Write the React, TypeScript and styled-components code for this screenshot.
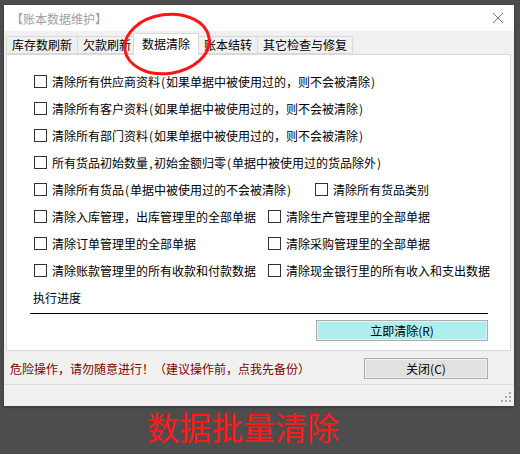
import React from "react";
import styled, { createGlobalStyle } from "styled-components";

const GlobalStyle = createGlobalStyle`
  html, body {
    margin: 0;
    padding: 0;
    background: #4d4d4d;
  }
  body {
    font-family: "Noto Sans CJK SC", "Microsoft YaHei", sans-serif;
    font-size: 12px;
    color: #000;
  }
`;

const Page = styled.div`
  width: 520px;
  height: 454px;
  box-sizing: border-box;
  padding: 5px 0 0 4px;
  display: flex;
  flex-direction: column;
  align-items: flex-start;
  overflow: hidden;
`;

const Window = styled.div`
  position: relative;
  width: 510px;
  height: 401px;
  background: #f0f0f0;
  display: flex;
  flex-direction: column;
  box-shadow: 0 1px 3px rgba(0, 0, 0, 0.35);
`;

const TitleBar = styled.div`
  height: 26px;
  background: #fff;
  display: flex;
  align-items: center;
  justify-content: space-between;
  padding: 0 10px 0 7px;
  flex-shrink: 0;
`;

const Title = styled.span`
  color: #a0a0a0;
  font-size: 12px;
  line-height: 12px;
  margin-top: 1px;
`;

const Body = styled.div`
  display: flex;
  flex-direction: column;
  padding: 2px 3px 0 2px;
`;

const TabBar = styled.div`
  display: flex;
  align-items: flex-end;
  height: 21px;
  position: relative;
  z-index: 1;
`;

const Tab = styled.div<{ $active?: boolean }>`
  box-sizing: border-box;
  height: ${(p) => (p.$active ? "22px" : "18px")};
  padding: ${(p) => (p.$active ? "3px 8px 0" : "0 5px")};
  margin: ${(p) => (p.$active ? "0 0 -1px -4px" : "0")};
  background: ${(p) => (p.$active ? "#fff" : "#f0f0f0")};
  border: 1px solid #d9d9d9;
  border-bottom: ${(p) => (p.$active ? "none" : "1px solid #d9d9d9")};
  border-left: ${(p) => (p.$active ? "1px solid #d9d9d9" : "none")};
  display: flex;
  align-items: ${(p) => (p.$active ? "flex-start" : "center")};
  white-space: nowrap;
  font-size: 12px;
  line-height: 14px;
  position: relative;
  z-index: ${(p) => (p.$active ? 2 : 1)};
  &:first-child {
    border-left: 1px solid #d9d9d9;
  }
`;

const Panel = styled.div`
  box-sizing: border-box;
  height: 297px;
  background: #fff;
  border: 1px solid #d9d9d9;
  padding: 13px 22px 0 23px;
  display: flex;
  flex-direction: column;
`;

const Row = styled.div<{ $split?: number }>`
  height: 27px;
  padding-left: 4px;
  display: grid;
  grid-template-columns: ${(p) => (p.$split ? `${p.$split}px auto` : "auto")};
  align-items: center;
  justify-content: start;
`;

const Check = styled.label`
  display: flex;
  align-items: center;
  gap: 5px;
  white-space: nowrap;
  line-height: 14px;
`;

const Box = styled.span`
  box-sizing: border-box;
  width: 13px;
  height: 13px;
  border: 1px solid #333;
  background: #fff;
  flex-shrink: 0;
`;

const Half = styled.span`
  display: inline-block;
  width: 6px;
  text-align: center;
`;

const ProgressLabel = styled.div`
  height: 27px;
  display: flex;
  align-items: center;
  padding-left: 3px;
`;

const Rule = styled.div`
  height: 1px;
  background: #000;
  margin-top: 2px;
`;

const ButtonRow = styled.div`
  display: flex;
  justify-content: flex-end;
  margin-top: 6px;
`;

const Button = styled.button<{ $w: number; $bg: string }>`
  box-sizing: border-box;
  width: ${(p) => p.$w}px;
  height: 21px;
  border: 1px solid #adadad;
  background: ${(p) => p.$bg};
  box-shadow: inset 0 0 0 1px rgba(255, 255, 255, 0.5);
  font-family: "Noto Sans CJK SC", sans-serif;
  font-size: 12px;
  color: #000;
  padding: 0;
  display: flex;
  align-items: center;
  justify-content: center;
  line-height: 14px;
`;

const Footer = styled.div`
  display: flex;
  flex-direction: column;
  flex: 1;
`;

const ActionRow = styled.div`
  display: flex;
  align-items: center;
  justify-content: space-between;
  padding: 7px 26px 0 6px;
`;

const Warning = styled.span`
  color: #800000;
  font-size: 12px;
  white-space: nowrap;
  margin-top: -1px;
`;

const Separator = styled.div`
  height: 1px;
  background: #dcdcdc;
  margin-top: 5px;
`;

const StatusStrip = styled.div`
  flex: 1;
  display: flex;
  justify-content: flex-end;
  align-items: flex-end;
  padding: 0 2px 3px 0;
`;

const Annotation = styled.svg`
  position: absolute;
  left: 118px;
  top: 0;
  pointer-events: none;
  z-index: 5;
`;

const Caption = styled.div`
  width: 510px;
  text-align: center;
  color: #ff1a1a;
  font-size: 32px;
  line-height: 36px;
  margin-top: 2px;
  padding-right: 32px;
  box-sizing: border-box;
`;

const CloseIcon = () => (
  <svg width="12" height="12" viewBox="0 0 12 12">
    <path d="M1 1 L11 11 M11 1 L1 11" stroke="#777" strokeWidth="1" fill="none" />
  </svg>
);

const Grip = () => (
  <svg width="12" height="12" viewBox="0 0 12 12">
    <g fill="#a8a8a8">
      <rect x="9" y="1" width="2" height="2" />
      <rect x="5" y="5" width="2" height="2" />
      <rect x="9" y="5" width="2" height="2" />
      <rect x="1" y="9" width="2" height="2" />
      <rect x="5" y="9" width="2" height="2" />
      <rect x="9" y="9" width="2" height="2" />
    </g>
  </svg>
);

const renderText = (s: string) =>
  s.split(/([(),])/).map((part, i) =>
    part === "(" || part === ")" || part === "," ? (
      <Half key={i}>{part}</Half>
    ) : (
      <React.Fragment key={i}>{part}</React.Fragment>
    )
  );

const CB = ({ text }: { text: string }) => (
  <Check>
    <Box />
    <span>{renderText(text)}</span>
  </Check>
);

const tabs = ["库存数刷新", "欠款刷新", "数据清除", "账本结转", "其它检查与修复"];

export default function App() {
  return (
    <>
      <GlobalStyle />
      <Page>
        <Window>
          <TitleBar>
            <Title>【账本数据维护】</Title>
            <CloseIcon />
          </TitleBar>
          <Body>
            <TabBar>
              {tabs.map((t) => (
                <Tab key={t} $active={t === "数据清除"}>
                  {t}
                </Tab>
              ))}
            </TabBar>
            <Panel>
              <Row>
                <CB text="清除所有供应商资料(如果单据中被使用过的，则不会被清除)" />
              </Row>
              <Row>
                <CB text="清除所有客户资料(如果单据中被使用过的，则不会被清除)" />
              </Row>
              <Row>
                <CB text="清除所有部门资料(如果单据中被使用过的，则不会被清除)" />
              </Row>
              <Row>
                <CB text="所有货品初始数量,初始金额归零(单据中被使用过的货品除外)" />
              </Row>
              <Row $split={281}>
                <CB text="清除所有货品(单据中被使用过的不会被清除)" />
                <CB text="清除所有货品类别" />
              </Row>
              <Row $split={234}>
                <CB text="清除入库管理，出库管理里的全部单据" />
                <CB text="清除生产管理里的全部单据" />
              </Row>
              <Row $split={234}>
                <CB text="清除订单管理里的全部单据" />
                <CB text="清除采购管理里的全部单据" />
              </Row>
              <Row $split={234}>
                <CB text="清除账款管理里的所有收款和付款数据" />
                <CB text="清除现金银行里的所有收入和支出数据" />
              </Row>
              <ProgressLabel>执行进度</ProgressLabel>
              <Rule />
              <ButtonRow>
                <Button $w={172} $bg="#afeeee">立即清除(R)</Button>
              </ButtonRow>
            </Panel>
          </Body>
          <Footer>
            <ActionRow>
              <Warning>危险操作，请勿随意进行！（建议操作前，点我先备份）</Warning>
              <Button $w={124} $bg="#e1e1e1">关闭(C)</Button>
            </ActionRow>
            <Separator />
            <StatusStrip>
              <Grip />
            </StatusStrip>
          </Footer>
          <Annotation width="100" height="80" viewBox="0 0 100 80">
            <ellipse
              cx="45"
              cy="39"
              rx="42.5"
              ry="29.5"
              transform="rotate(-8 45 39)"
              fill="none"
              stroke="#ff1414"
              strokeWidth="3"
            />
          </Annotation>
        </Window>
        <Caption>数据批量清除</Caption>
      </Page>
    </>
  );
}
